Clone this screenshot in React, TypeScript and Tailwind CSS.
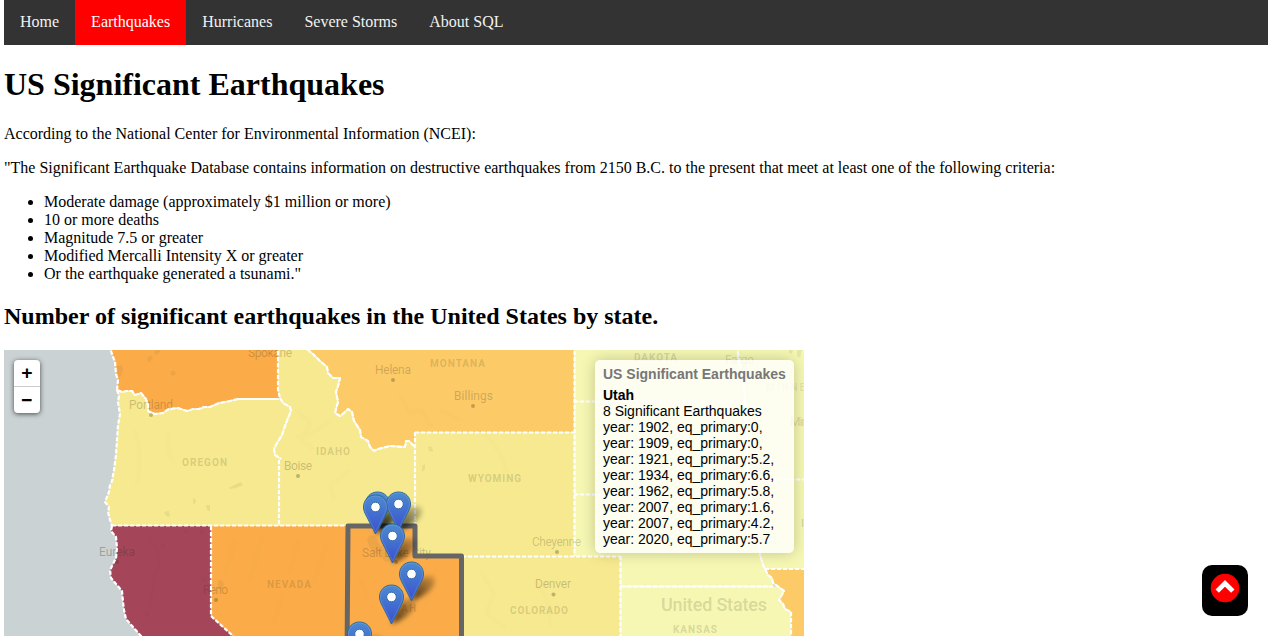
import React from "react";

const navItems = ["Home", "Earthquakes", "Hurricanes", "Severe Storms", "About SQL"];

const criteria = [
  "Moderate damage (approximately $1 million or more)",
  "10 or more deaths",
  "Magnitude 7.5 or greater",
  "Modified Mercalli Intensity X or greater",
  'Or the earthquake generated a tsunami."',
];

const quakes = [
  "year: 1902, eq_primary:0,",
  "year: 1909, eq_primary:0,",
  "year: 1921, eq_primary:5.2,",
  "year: 1934, eq_primary:6.6,",
  "year: 1962, eq_primary:5.8,",
  "year: 2007, eq_primary:1.6,",
  "year: 2007, eq_primary:4.2,",
  "year: 2020, eq_primary:5.7",
];

// Shared borders between neighbouring states
const COLUMBIA =
  "117,390 122,392 127,391 132,391 135,395 141,393 146,399 148,405 148,411 155,414 163,413 169,409 178,408 187,411 193,409 199,409 204,407 210,407 219,403 230,401 238,399 279,399";
const SNAKE =
  "280,398 283,403 290,407 291,411 288,418 285,426 282,435 277,443 274,449 275,455 281,459 279,467 279,526";
const BITTERROOT =
  "308,350 314,355 320,361 327,367 328,373 333,378 340,378 338,386 336,392 338,402 335,413 340,416 344,413 348,409 352,412 354,421 360,430 361,437 368,441 370,447 374,451 378,449 390,446 405,447 406,441 409,441 415,447";
const COAST_WA = "109,345 112,354 115,362 116,374 118,380 117,390";
const COAST_OR =
  "117,390 119,396 118,402 120,414 118,425 117,440 116,455 114,470 112,481 110,485 109,492 105,502 109,507 108,512 110,520 112,526";
const COAST_CA =
  "112,526 111,531 116,537 117,548 116,558 110,570 111,578 122,591 123,602 124,610 126,619 141,636 160,660";
const MISSOURI_RIVER =
  "765,569 768,575 772,578 773,583 780,588 784,591 779,600 783,604 785,609 791,612 791,670";

const states: { name: string; fill: string; points: string }[] = [
  { name: "WA", fill: "#fbac49", points: `${COAST_WA} ${COLUMBIA} 278,390 278,345` },
  { name: "OR", fill: "#f6e98f", points: `${COAST_OR.split(" ").reverse().join(" ")} ${COLUMBIA} ${SNAKE}` },
  { name: "ID", fill: "#f6e98f", points: `278,345 278,390 ${SNAKE} 415,526 ${BITTERROOT.split(" ").reverse().join(" ")} 302,345` },
  { name: "MT", fill: "#fccb67", points: `302,345 ${BITTERROOT} 415,432 574,432 574,345` },
  { name: "CA", fill: "#a54559", points: `${COAST_CA} 260,660 233,636 211,616 211,526` },
  { name: "NV", fill: "#fbac49", points: "211,526 211,616 233,636 260,660 347,660 347,526" },
  { name: "UT", fill: "#fbac49", points: "347,526 415,526 415,556 462,556 462,660 347,660" },
  { name: "WY", fill: "#f6e98f", points: "415,432 574,432 574,556 415,556" },
  { name: "CO", fill: "#f6e98f", points: "462,556 620,556 620,670 462,670" },
  { name: "ND", fill: "#f5f7b2", points: "574,345 737,345 739,362 744,386 745,401 574,401" },
  { name: "SD", fill: "#f5f7b2", points: "574,401 745,401 748,480 751,504 738,500 720,495 574,494" },
  { name: "NE", fill: "#f5f7b2", points: "574,494 720,495 738,500 748,504 754,530 759,540 760,555 763,565 765,569 768,575 772,578 773,586 620,586 620,556 574,556" },
  { name: "KS", fill: "#f5f7b2", points: "620,586 773,586 780,588 784,591 779,600 783,604 785,609 791,612 791,670 620,670" },
  { name: "MN", fill: "#f5f7b2", points: "737,345 739,362 744,386 745,401 748,480 815,480 815,345" },
  { name: "IA", fill: "#f5f7b2", points: "748,480 751,504 754,530 759,540 760,555 763,565 765,569 815,569 815,480" },
  { name: "MO", fill: "#fccb67", points: `${MISSOURI_RIVER} 815,670 815,569` },
];

// Outlines whose dashes stay distinct
const dashedBorders = [
  COAST_WA,
  COAST_OR,
  COAST_CA,
  "278,345 278,390 280,398",
  "238,399 279,399",
  "279,460 279,526",
  "112,525.5 347,525.5",
  "211,526 211,616 233,636 260,660",
  "415,432.5 574,432.5",
  "415,432 415,526",
  "574.5,345 574.5,556",
  "462,556.5 620,556.5",
  "574,401.5 745,401.5",
  "574,494.5 720,494.5 738,500 748,504",
  "620.5,556 620.5,670",
  "748,479.5 815,479.5",
  "765,569 815,569",
  "791,612 791,670",
];

// River and ridge outlines that read as nearly continuous lines
const solidBorders = [
  COLUMBIA,
  "280,398 283,403 290,407 291,411 288,418 285,426 282,435 277,443 274,449 275,455 281,459",
  `302,345 ${BITTERROOT}`,
  "620,586.5 773,586.5",
  "737,345 739,362 744,386 745,401 748,480 751,504 754,530 759,540 760,555 763,565 765,569",
  "765,569 768,575 772,578 773,583 780,588 784,591 779,600 783,604 785,609 791,612",
];

type MapLabel = { t: string; x: number; y: number; w: number; k?: "state" | "country"; o?: number };

const labels: MapLabel[] = [
  { t: "Spokane", x: 248, y: 357, w: 44 },
  { t: "Portland", x: 129, y: 409, w: 44 },
  { t: "Helena", x: 375, y: 374, w: 36 },
  { t: "Billings", x: 454, y: 400, w: 39 },
  { t: "Boise", x: 284, y: 470, w: 28 },
  { t: "Eureka", x: 99, y: 556, w: 36, o: 0.33 },
  { t: "Reno", x: 203, y: 594, w: 25 },
  { t: "Salt Lake City", x: 362, y: 557, w: 69 },
  { t: "Cheyenne", x: 532, y: 546, w: 49, o: 0.22 },
  { t: "Denver", x: 535, y: 588, w: 36 },
  { t: "Fargo", x: 725, y: 364, w: 29, o: 0.18 },
  { t: "Min", x: 790, y: 426, w: 18, o: 0.18 },
  { t: "Sioux Falls", x: 716, y: 473, w: 54, o: 0.12 },
  { t: "Omaha", x: 742, y: 543, w: 35, o: 0.1 },
  { t: "OREGON", x: 182, y: 466, w: 47, k: "state" },
  { t: "IDAHO", x: 316, y: 455, w: 36, k: "state" },
  { t: "MONTANA", x: 430, y: 367, w: 57, k: "state" },
  { t: "WYOMING", x: 468, y: 482, w: 55, k: "state" },
  { t: "NEVADA", x: 267, y: 588, w: 46, k: "state" },
  { t: "UTAH", x: 386, y: 612, w: 32, k: "state" },
  { t: "COLORADO", x: 510, y: 614, w: 60, k: "state" },
  { t: "KANSAS", x: 673, y: 633, w: 46, k: "state" },
  { t: "DAKOTA", x: 634, y: 361, w: 45, k: "state" },
  { t: "MINNESOTA", x: 766, y: 391, w: 74, k: "state", o: 0.1 },
  { t: "IOWA", x: 801, y: 527, w: 28, k: "state" },
  { t: "United States", x: 661, y: 611, w: 106, k: "country" },
];

const cities: [number, number][] = [
  [151, 415],
  [393, 380],
  [473, 406],
  [298, 476],
  [117, 562],
  [216, 600],
  [396, 562],
  [557, 552],
  [553.5, 594.5],
];

const markers: [number, number][] = [
  [377.5, 504],
  [398.5, 504],
  [375.5, 507],
  [392.5, 536],
  [411.5, 574],
  [391.5, 597],
  [359.5, 634],
];

function Terrain() {
  return (
    <g fill="#5a5a32" fillOpacity="0.09">
      <path d="M147 358l4-3 2 3-4 5zM154 352l5-3 1 3-4 3zM117 366l5-1 1 5-3 8-2-2z" />
      <path d="M229 488l5-3 7-3 2 3-7 3-6 1z" />
      <path d="M428 446l4 1 1 5-4-1zM422 466l3-2v5l-3 3z" />
      <path d="M164 512l5-1 1 6-4-1zM193 498l3 2-1 4-2-1zM206 505l4 0v6l-3-1z" />
      <path d="M183 529l4 0 1 4-4 0zM200 529l4 0-1 6-3-2z" />
      <path d="M218 581l4-1 2 4-2 5-4 0zM200 578l6-1 1 3-5 2zM146 612l3 1-1 4-3-2z" />
      <path d="M370 535l6 2 3 7 6 4 5 5 2 8-7 1-6-8-5-1-5-7-2-6zM389 558l6-1 2 5-5 2z" />
      <path d="M789 350l4 0-1 4-3-1zM797 349l5 1-2 8-3-2z" />
      <circle cx="173" cy="373" r="2.5" />
      <circle cx="163" cy="546" r="2.5" />
      <g fill="none" stroke="#5a5a32" strokeOpacity="0.02" strokeWidth="2" filter="url(#haze)">
        <path d="M135 430q8 24 2 55M170 432q-6 16 4 30M146 538q22 16 8 40l-4 30" />
        <path d="M296 410l14 12-8 18 12 10M330 420q-20 18-35 16M350 470l-20 16 4 14" />
        <path d="M400 395l10 18 12-3 9 17M440 410l20 10M478 430q22 14 29 43" />
        <path d="M235 540l-10 36M262 536l-12 44M298 540l-8 32M326 545l-12 38M282 595l-8 30" />
        <path d="M480 570l14 24-8 20 20 14M535 580l12 20 4 26M360 580l8 20M435 570l-9 36" />
      </g>
    </g>
  );
}

function Marker({ x, y }: { x: number; y: number }) {
  return (
    <g transform={`translate(${x} ${y})`}>
      <path
        d="M0 -12C-6.8 -12 -12 -6.8 -12 0C-12 2.9 -11 5.4 -9.6 8L0 27L9.6 8C11 5.4 12 2.9 12 0C12 -6.8 6.8 -12 0 -12Z"
        fill="url(#pinFill)"
        stroke="#2e6c97"
        strokeWidth="1"
      />
      <path
        d="M0 -11C-6.2 -11 -11 -6.2 -11 0C-11 2.7 -10.1 5 -8.7 7.6L0 24.8L8.7 7.6C10.1 5 11 2.7 11 0C11 -6.2 6.2 -11 0 -11Z"
        fill="none"
        stroke="#ffffff"
        strokeOpacity="0.13"
      />
      <circle r="4.8" fill="#fff" stroke="#356da8" strokeWidth="1" />
    </g>
  );
}

function StateMap() {
  return (
    <svg
      className="block h-[286px] w-[800px] bg-[#cad2d3]"
      viewBox="4 350 800 286"
      role="img"
      aria-label="Map of significant earthquakes by state"
    >
      <defs>
        <linearGradient id="pinFill" x1="0" y1="0" x2="0" y2="1">
          <stop offset="0" stopColor="#4c8bd0" />
          <stop offset="1" stopColor="#3950d0" />
        </linearGradient>
        <linearGradient id="shadowFill" x1="0" x2="1" y1="1" y2="0">
          <stop offset="0" stopColor="#000" stopOpacity="0.75" />
          <stop offset="1" stopColor="#000" stopOpacity="0.12" />
        </linearGradient>
        <filter id="soft" x="-50%" y="-50%" width="200%" height="200%">
          <feGaussianBlur stdDeviation="2.4" />
        </filter>
        <filter id="haze">
          <feGaussianBlur stdDeviation="1.5" />
        </filter>
      </defs>
      {states.map((s) => (
        <polygon key={s.name} points={s.points} fill={s.fill} />
      ))}
      <Terrain />
      <g fill="#3c371e">
        {cities.map(([cx, cy]) => (
          <circle key={`${cx}-${cy}`} cx={cx} cy={cy} r="2" fillOpacity="0.3" />
        ))}
        {labels.map((l) => (
          <text
            key={l.t}
            x={l.x}
            y={l.y}
            textLength={l.w}
            fillOpacity={l.o ?? (l.k ? 0.18 : 0.25)}
            className={
              l.k === "state"
                ? "font-[Roboto,sans-serif] text-[10px] font-bold tracking-[2px]"
                : l.k === "country"
                  ? "font-[Roboto,sans-serif] text-[18px] font-medium"
                  : "font-[Roboto,sans-serif] text-[12px]"
            }
          >
            {l.t}
          </text>
        ))}
      </g>
      <g fill="none" stroke="#fff" strokeLinejoin="round">
        {dashedBorders.map((p) => (
          <g key={p}>
            <polyline points={p} strokeWidth="1" strokeOpacity="0.25" />
            <polyline points={p} strokeWidth="2.2" strokeDasharray="4.2 1.8" />
          </g>
        ))}
        {solidBorders.map((p) => (
          <g key={p}>
            <polyline points={p} strokeWidth="1.4" strokeOpacity="0.8" />
            <polyline points={p} strokeWidth="2.2" strokeDasharray="5 1.5" />
          </g>
        ))}
      </g>
      <path
        d="M347 660L348 526H415V556H461.500V660Z"
        fill="none"
        stroke="#666"
        strokeWidth="5"
        strokeLinejoin="round"
      />
      <g filter="url(#soft)">
        {markers.map(([x, y]) => (
          <path
            key={`${x}-${y}`}
            transform={`translate(${x} ${y + 27})`}
            d="M0 0L4 -14Q9 -26 19 -25Q27 -22 21 -14Q14 -5 0 0Z"
            fill="url(#shadowFill)"
          />
        ))}
      </g>
      {markers.map(([x, y]) => (
        <Marker key={`${x}-${y}`} x={x} y={y} />
      ))}
    </svg>
  );
}

export default function App() {
  return (
    <div className="h-[636px] overflow-hidden bg-white pl-1 font-['Liberation_Serif',serif] text-base leading-[18px] text-black">
      <nav className="flex h-[45px] bg-[#333]">
        {navItems.map((item) => (
          <a
            key={item}
            href="#"
            className={
              item === "Earthquakes"
                ? "bg-[#ff0000] px-4 pt-[13px] text-white"
                : "px-4 pt-[13px] text-[#f2f2f2]"
            }
          >
            {item}
          </a>
        ))}
      </nav>
      <h1 className="mt-[21px] text-[32px] leading-[37px] font-bold">US Significant Earthquakes</h1>
      <p className="mt-[22px]">According to the National Center for Environmental Information (NCEI):</p>
      <p className="mt-4">
        "The Significant Earthquake Database contains information on destructive earthquakes from 2150 B.C. to the
        present that meet at least one of the following criteria:
      </p>
      <ul className="mt-4 list-disc pl-10">
        {criteria.map((c) => (
          <li key={c}>{c}</li>
        ))}
      </ul>
      <h2 className="mt-5 text-2xl leading-[27px] font-bold">
        Number of significant earthquakes in the United States by state.
      </h2>
      <div className="relative mt-5 h-[286px] w-[800px] overflow-hidden">
        <StateMap />
        <div className="absolute top-[10px] left-[10px] flex w-[26px] flex-col overflow-hidden rounded-[4px] bg-white text-center indent-px font-['DejaVu_Sans_Mono',monospace] text-[18px] leading-[26px] font-bold shadow-[0_1px_5px_rgba(0,0,0,0.65)]">
          <button className="h-[27px] border-b border-[#ccc]">+</button>
          <button className="h-[26px]">−</button>
        </div>
        <div className="absolute top-[10px] right-[10px] w-[199px] rounded-[5px] bg-white/80 px-2 py-1.5 font-['Liberation_Sans',sans-serif] text-sm leading-4 whitespace-nowrap shadow-[0_0_15px_rgba(0,0,0,0.2)]">
          <h4 className="mb-[5px] font-bold text-[#777]">US Significant Earthquakes</h4>
          <b className="block">Utah</b>
          <div>8 Significant Earthquakes</div>
          {quakes.map((q, i) => (
            <div key={i}>{q}</div>
          ))}
        </div>
      </div>
      <button
        aria-label="Back to top"
        className="fixed right-5 bottom-5 flex h-[51px] w-[46px] justify-center rounded-[10px] bg-black pt-2"
      >
        <svg className="h-[30px] w-[30px]" viewBox="0 0 30 30">
          <circle cx="15" cy="15" r="14.3" fill="#ff0000" />
          <path
            d="M7.200 18.100L15 10.300L22.800 18.100"
            fill="none"
            stroke="#fff"
            strokeWidth="4.800"
          />
        </svg>
      </button>
    </div>
  );
}
